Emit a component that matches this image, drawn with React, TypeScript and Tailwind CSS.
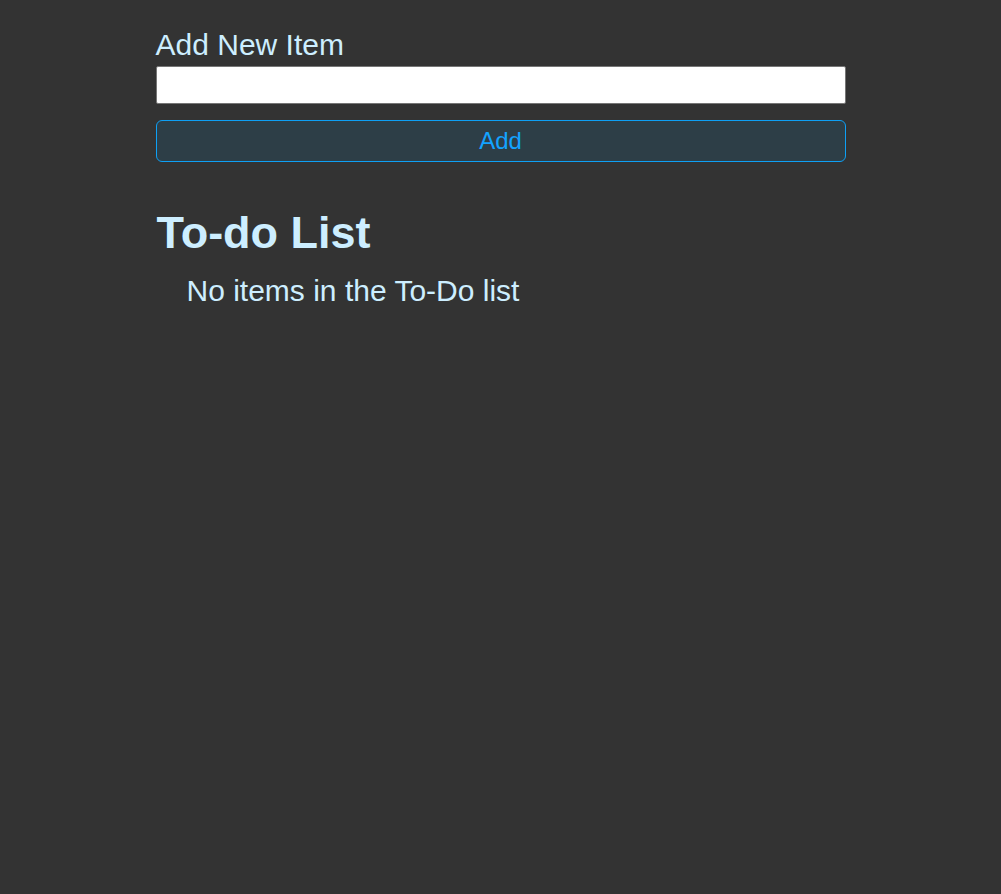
export default function App() {
  return (
    <div className="min-h-[894px] bg-[#333333] font-['Liberation_Sans',Arial,sans-serif] text-[#cdeeff]">
      <div className="mx-auto w-[690px] pt-[26px]">
        <label className="mb-[2px] block text-[30px] leading-[38px]">Add New Item</label>
        <input
          type="text"
          className="block h-[38px] w-full rounded-[2px] border border-[#767676] bg-white px-2 text-black outline-none"
        />
        <button className="mt-[16px] block h-[42px] w-full rounded-[6px] border border-[#0ea0f5] bg-[#2d3e47] text-[24px] text-[#13a3ff]">
          Add
        </button>
        <h1 className="mt-[45px] pl-[1px] text-[45px] font-bold leading-[52px]">To-do List</h1>
        <ul className="mt-[13px] pl-[31px]">
          <li className="text-[30px] leading-[38px]">No items in the To-Do list</li>
        </ul>
      </div>
    </div>
  );
}
